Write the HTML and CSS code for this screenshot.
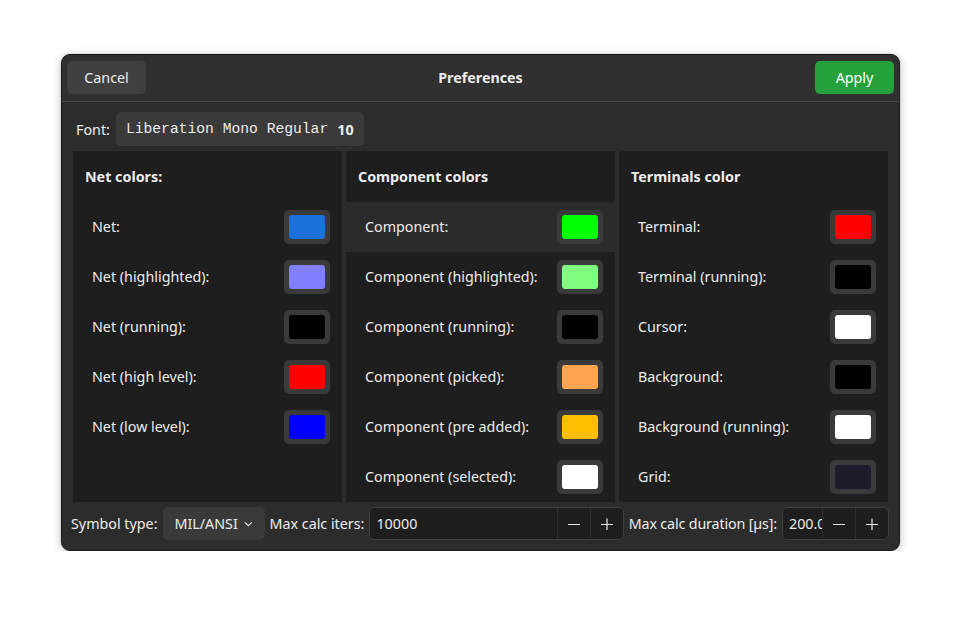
FILE: index.html
```html
<!DOCTYPE html>
<html>
<head>
<meta charset="utf-8">
<link rel="stylesheet" href="styles.css">
</head>
<body>
<div class="dialog">
  <header class="hb">
    <button class="btn">Cancel</button>
    <div class="title">Preferences</div>
    <button class="btn suggested">Apply</button>
  </header>
  <div class="content">
    <div class="font-row">
      <span class="lbl">Font:</span>
      <button class="fontbtn"><span class="mono">Liberation Mono Regular</span><b class="size">10</b></button>
    </div>
    <div class="panels">
      <section class="panel">
        <h3 class="ph">Net colors:</h3>
        <div class="row"><span class="rl">Net:</span><button class="swatch"><span class="chip" style="background:#1c71d8"></span></button></div>
        <div class="row"><span class="rl">Net (highlighted):</span><button class="swatch"><span class="chip" style="background:#8080ff"></span></button></div>
        <div class="row"><span class="rl">Net (running):</span><button class="swatch"><span class="chip" style="background:#000000"></span></button></div>
        <div class="row"><span class="rl">Net (high level):</span><button class="swatch"><span class="chip" style="background:#ff0000"></span></button></div>
        <div class="row"><span class="rl">Net (low level):</span><button class="swatch"><span class="chip" style="background:#0000ff"></span></button></div>
      </section>
      <section class="panel">
        <h3 class="ph">Component colors</h3>
        <div class="row hover"><span class="rl">Component:</span><button class="swatch"><span class="chip" style="background:#00ff00"></span></button></div>
        <div class="row"><span class="rl">Component (highlighted):</span><button class="swatch"><span class="chip" style="background:#80ff80"></span></button></div>
        <div class="row"><span class="rl">Component (running):</span><button class="swatch"><span class="chip" style="background:#000000"></span></button></div>
        <div class="row"><span class="rl">Component (picked):</span><button class="swatch"><span class="chip" style="background:#ffa54f"></span></button></div>
        <div class="row"><span class="rl">Component (pre added):</span><button class="swatch"><span class="chip" style="background:#ffbf00"></span></button></div>
        <div class="row"><span class="rl">Component (selected):</span><button class="swatch"><span class="chip" style="background:#ffffff"></span></button></div>
      </section>
      <section class="panel">
        <h3 class="ph">Terminals color</h3>
        <div class="row"><span class="rl">Terminal:</span><button class="swatch"><span class="chip" style="background:#ff0000"></span></button></div>
        <div class="row"><span class="rl">Terminal (running):</span><button class="swatch"><span class="chip" style="background:#000000"></span></button></div>
        <div class="row"><span class="rl">Cursor:</span><button class="swatch"><span class="chip" style="background:#ffffff"></span></button></div>
        <div class="row"><span class="rl">Background:</span><button class="swatch"><span class="chip" style="background:#000000"></span></button></div>
        <div class="row"><span class="rl">Background (running):</span><button class="swatch"><span class="chip" style="background:#ffffff"></span></button></div>
        <div class="row"><span class="rl">Grid:</span><button class="swatch"><span class="chip" style="background:#1e1b2c"></span></button></div>
      </section>
    </div>
    <div class="bottom">
      <span class="lbl">Symbol type:</span>
      <button class="dropdown"><span>MIL/ANSI</span>
        <svg class="chev" width="10" height="6" viewBox="0 0 10 6"><path d="M1 1 L5 5 L9 1" fill="none" stroke="#e8e8e8" stroke-width="1.2"/></svg>
      </button>
      <span class="lbl">Max calc iters:</span>
      <div class="spin grow">
        <span class="val">10000</span>
        <span class="sb"><svg width="12" height="12" viewBox="0 0 12 12"><path d="M0 6.5 H12" stroke="#e8e8e8" stroke-width="1.2"/></svg></span>
        <span class="sb"><svg width="12" height="12" viewBox="0 0 12 12"><path d="M0 6.5 H12 M6 0.5 V12.5" stroke="#e8e8e8" stroke-width="1.2"/></svg></span>
      </div>
      <span class="lbl tight">Max calc duration [µs]:</span>
      <div class="spin fixed">
        <span class="val">200.0</span>
        <span class="sb"><svg width="12" height="12" viewBox="0 0 12 12"><path d="M0 6.5 H12" stroke="#e8e8e8" stroke-width="1.2"/></svg></span>
        <span class="sb"><svg width="12" height="12" viewBox="0 0 12 12"><path d="M0 6.5 H12 M6 0.5 V12.5" stroke="#e8e8e8" stroke-width="1.2"/></svg></span>
      </div>
    </div>
  </div>
</div>
</body>
</html>
```

FILE: styles.css
```css
* { box-sizing: border-box; }
html, body { margin: 0; background: #ffffff; }
body {
  padding: 54px 0 0 61px;
  font-family: "Noto Sans", "Open Sans", sans-serif;
  font-size: 14.3px;
  color: #ececec;
}
button { font: inherit; color: inherit; border: none; margin: 0; }
.dialog {
  width: 839px;
  height: 497px;
  border: 1px solid #1b1b1b;
  border-radius: 9px;
  background: #2c2c2c;
  overflow: hidden;
  box-shadow: 0 2px 10px rgba(0,0,0,0.25), 0 0 0 1px rgba(0,0,0,0.05);
  display: flex;
  flex-direction: column;
}
.hb {
  height: 47px;
  background: #303030;
  border-bottom: 1px solid #484848;
  padding: 6px 5px 0 5px;
  display: flex;
  align-items: flex-start;
  justify-content: space-between;
}
.btn {
  width: 79px;
  height: 33px;
  border-radius: 5px;
  background: #404040;
}
.btn.suggested { background: #26a13b; color: #ffffff; }
.title {
  font-weight: bold;
  line-height: 33px;
}
.content {
  padding: 10px 11px 10px 11px;
  display: flex;
  flex-direction: column;
}
.font-row {
  height: 34px;
  display: flex;
  align-items: center;
  gap: 6px;
  padding-left: 3px;
}
.fontbtn {
  height: 34px;
  background: #3a3a3a;
  border-radius: 5px;
  padding: 0 10px 0 10px;
  display: flex;
  align-items: center;
  gap: 9px;
}
.mono { font-family: "Liberation Mono", monospace; font-size: 14.67px; margin-top: -1px; }
.size { font-weight: bold; }
.panels {
  margin-top: 5px;
  height: 350px;
  display: grid;
  grid-template-columns: 269px 269px 269px;
  gap: 4px;
}
.panel {
  background: #1e1e1e;
  display: flex;
  flex-direction: column;
}
.ph {
  margin: 0;
  height: 51px;
  padding-left: 12px;
  font-size: 14.3px;
  font-weight: bold;
  line-height: 51px;
}
.row {
  height: 50px;
  display: flex;
  align-items: center;
  justify-content: space-between;
  padding: 0 12px 0 19px;
  flex: none;
}
.rl { margin-top: -2px; }
.row.hover { background: #2b2b2b; }
.swatch {
  width: 46px;
  height: 34px;
  background: #3a3a3a;
  border-radius: 5px;
  padding: 5px;
  display: flex;
}
.chip { flex: 1; border-radius: 3px; display: block; }
.bottom {
  margin-top: 6px;
  height: 33px;
  display: flex;
  align-items: center;
  gap: 5px;
  margin-left: -2px;
  margin-right: -1px;
}
.lbl { white-space: nowrap; }
.lbl.tight { letter-spacing: -0.15px; }
.dropdown {
  width: 102px;
  height: 33px;
  background: #3a3a3a;
  border-radius: 5px;
  display: flex;
  align-items: center;
  padding: 0 12px;
  gap: 6px;
}
.chev { margin-top: 1px; }
.spin {
  height: 33px;
  border: 1px solid #3f3f3f;
  border-radius: 5px;
  background: #1e1e1e;
  display: flex;
  align-items: stretch;
  overflow: hidden;
}
.spin.grow { flex: 1; }
.spin.fixed { width: 107px; flex: none; }
.val {
  flex: 1;
  min-width: 0;
  overflow: hidden;
  white-space: nowrap;
  padding-left: 6px;
  display: flex;
  align-items: center;
}
.sb {
  width: 33px;
  flex: none;
  border-left: 1px solid #2e2e2e;
  display: flex;
  align-items: center;
  justify-content: center;
}
```
